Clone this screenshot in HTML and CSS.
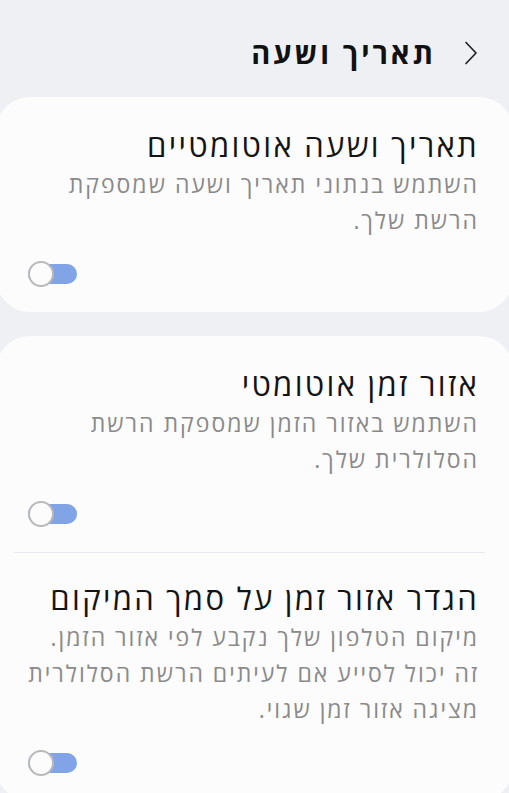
FILE: index.html
```html
<!DOCTYPE html>
<html lang="he" dir="rtl">
<head>
<meta charset="UTF-8" />
<meta name="viewport" content="width=device-width, initial-scale=1.0" />
<title>תאריך ושעה</title>
<link rel="stylesheet" href="styles.css">
</head>
<body>
<div class="header">
    <svg class="back" width="14" height="24" viewBox="0 0 14 24">
        <path d="M2 1.5 L12 12 L2 22.5" fill="none" stroke="#222" stroke-width="1.7" stroke-linecap="round" stroke-linejoin="round" />
    </svg>
    <h1>תאריך ושעה</h1>
</div>

<div class="card">
    <div class="item">
        <div class="item-title">תאריך ושעה אוטומטיים</div>
        <div class="item-desc">השתמש בנתוני תאריך ושעה שמספקת הרשת שלך.</div>
        <span class="toggle"></span>
    </div>
</div>

<div class="card">
    <div class="item">
        <div class="item-title">אזור זמן אוטומטי</div>
        <div class="item-desc">השתמש באזור הזמן שמספקת הרשת הסלולרית שלך.</div>
        <span class="toggle"></span>
    </div>
    <hr class="divider" />
    <div class="item">
        <div class="item-title">הגדר אזור זמן על סמך המיקום</div>
        <div class="item-desc">מיקום הטלפון שלך נקבע לפי אזור הזמן. זה יכול לסייע אם לעיתים הרשת הסלולרית מציגה אזור זמן שגוי.</div>
        <span class="toggle"></span>
    </div>
</div>
</body>
</html>
```

FILE: styles.css
```css
body {
    margin: 0;
    background-color: #eef0f3;
    font-family: "Open Sans", "Liberation Sans", sans-serif;
    color: #111;
    overflow: hidden;
}

.header {
    display: flex;
    align-items: center;
    gap: 28px;
    height: 97px;
    padding: 8px 31px 0 0;
    box-sizing: border-box;
}

.back {
    display: block;
}

h1 {
    margin: 0;
    font-size: 29px;
    font-weight: 700;
    letter-spacing: 3px;
}

.card {
    background-color: #fcfcfd;
    border-radius: 34px;
    margin: 0 -4px 24px;
    padding: 0 34px 0 24px;
}

.item {
    padding: 27px 0 28px;
}

.divider + .item {
    padding-top: 24px;
}

.item-title {
    font-size: 31px;
    line-height: 42px;
    letter-spacing: 2.3px;
    white-space: nowrap;
    color: #141414;
}

.item-desc {
    font-size: 23px;
    line-height: 36px;
    letter-spacing: 2px;
    color: #8a8a8a;
}

.toggle {
    display: block;
    position: relative;
    width: 49px;
    height: 20px;
    margin: 27px auto 0 8px;
    border-radius: 10px;
    background-color: #80a4e6;
}

.toggle::before {
    content: "";
    position: absolute;
    left: 0;
    top: -3px;
    width: 26px;
    height: 26px;
    border-radius: 50%;
    background-color: #fcfcfd;
    border: 2px solid #b9b9bd;
    box-sizing: border-box;
}

.divider {
    border: none;
    border-top: 1px solid #e8eaed;
    margin: 0 -6px 0 -6px;
}

.item:last-child .toggle {
    margin-top: 26px;
}
```
